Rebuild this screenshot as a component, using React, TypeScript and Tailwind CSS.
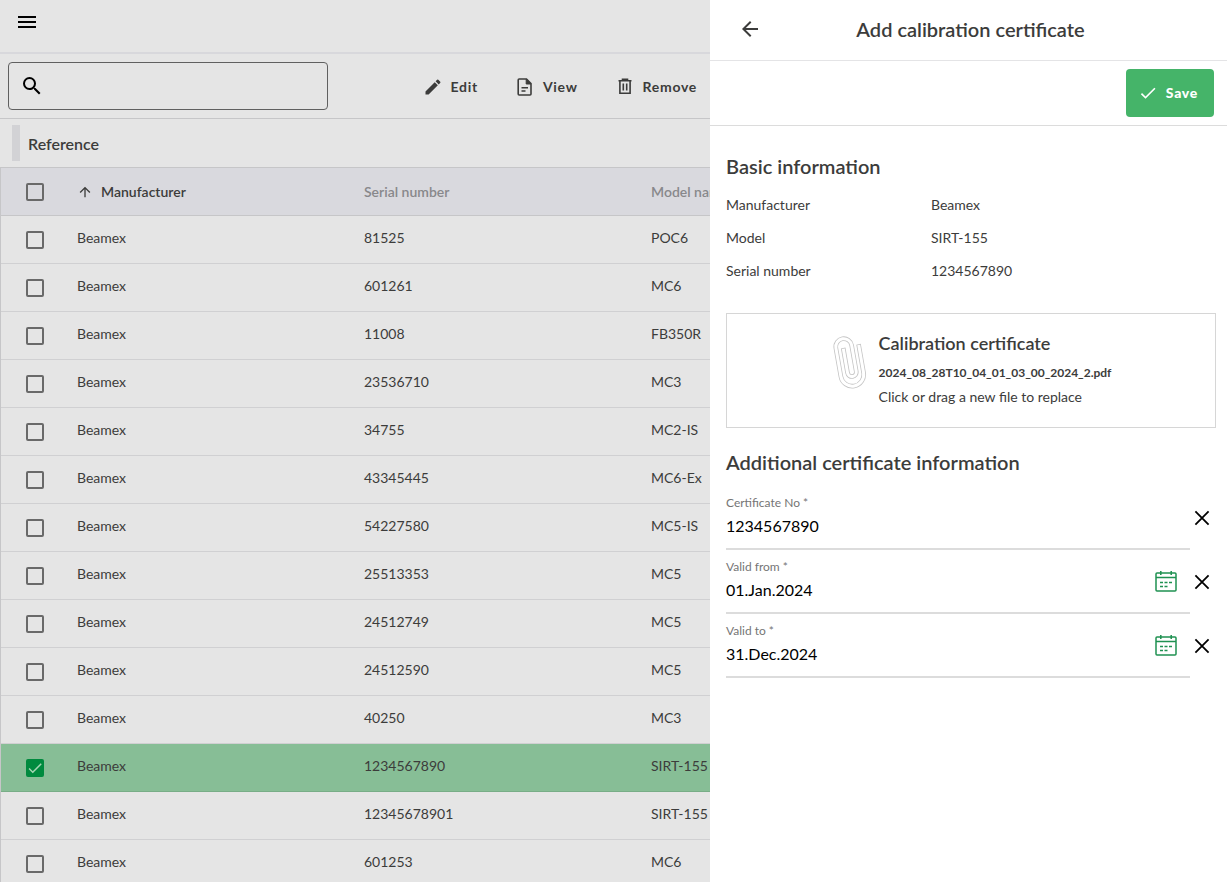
import { useState } from "react";
import type { ReactNode } from "react";
import {
	MdArrowBack,
	MdArrowUpward,
	MdCheck,
	MdEdit,
	MdMenu,
	MdSearch,
} from "react-icons/md";

interface Instrument {
	manufacturer: string;
	serial: string;
	model: string;
}

const instruments: Instrument[] = [
	{ manufacturer: "Beamex", serial: "81525", model: "POC6" },
	{ manufacturer: "Beamex", serial: "601261", model: "MC6" },
	{ manufacturer: "Beamex", serial: "11008", model: "FB350R" },
	{ manufacturer: "Beamex", serial: "23536710", model: "MC3" },
	{ manufacturer: "Beamex", serial: "34755", model: "MC2-IS" },
	{ manufacturer: "Beamex", serial: "43345445", model: "MC6-Ex" },
	{ manufacturer: "Beamex", serial: "54227580", model: "MC5-IS" },
	{ manufacturer: "Beamex", serial: "25513353", model: "MC5" },
	{ manufacturer: "Beamex", serial: "24512749", model: "MC5" },
	{ manufacturer: "Beamex", serial: "24512590", model: "MC5" },
	{ manufacturer: "Beamex", serial: "40250", model: "MC3" },
	{ manufacturer: "Beamex", serial: "1234567890", model: "SIRT-155" },
	{ manufacturer: "Beamex", serial: "12345678901", model: "SIRT-155" },
	{ manufacturer: "Beamex", serial: "601253", model: "MC6" },
];

const DocumentIcon = () => (
	<svg viewBox="0 0 20 20" className="size-5" fill="none" stroke="currentColor" strokeWidth="1.6">
		<path d="M4.2 2h7.3L16 6.5V17a1 1 0 0 1-1 1H4.2a1 1 0 0 1-1-1V3a1 1 0 0 1 1-1z" />
		<path d="M11.2 2v5H16z" fill="currentColor" strokeWidth="1" />
		<path d="M6.5 10.7h6.5M6.5 14h4" strokeWidth="1.4" />
	</svg>
);

const TrashIcon = () => (
	<svg viewBox="0 0 20 20" className="size-5" fill="none" stroke="currentColor" strokeWidth="1.6">
		<path d="M3.5 3.7h13M7.5 3.2V2.4h5v.8" />
		<path d="M4.9 4v12.2h10.2V4" />
		<path d="M8.3 6.5v7M11.7 6.5v7" />
	</svg>
);

const CalendarIcon = () => (
	<svg viewBox="0 0 24 24" className="size-6" fill="none" stroke="currentColor" strokeWidth="1.5">
		<rect x="2" y="4" width="20" height="18" rx="1" />
		<path d="M2 8.6h20M6.8 2v4M17.2 2v4" />
		<path d="M6 13.5h3M10.5 13.5h3M15 13.5h3M6 17.5h3M10.5 17.5h3" />
	</svg>
);

const CrossIcon = () => (
	<svg viewBox="0 0 24 24" className="size-6" fill="none" stroke="black" strokeWidth="1.8">
		<path d="M5.4 5.4l13.2 13.2M18.6 5.4L5.4 18.6" />
	</svg>
);

const clipPath =
	"M30.5 13.5V40a11.5 11.5 0 0 1-23 0V11a8 8 0 0 1 16 0v26.5a4.4 4.4 0 0 1-8.8 0V14.5";

const PaperclipIcon = () => (
	<svg viewBox="0 0 36 54" className="h-[54px] w-9" fill="none" strokeLinecap="square">
		<g transform="rotate(-10 18 27)">
			<path d={clipPath} stroke="#c4c4c4" strokeWidth="4.6" />
			<path d={clipPath} stroke="#ffffff" strokeWidth="3" />
		</g>
	</svg>
);

interface CheckboxProps {
	label: string;
	checked: boolean;
	onChange: () => void;
}

const Checkbox = ({ label, checked, onChange }: CheckboxProps) => (
	<span className="grid size-[18px] place-items-center">
		<input
			type="checkbox"
			aria-label={label}
			checked={checked}
			onChange={onChange}
			className="col-start-1 row-start-1 size-[18px] appearance-none rounded-xs border-2 border-[#696969] checked:border-[#008a3e] checked:bg-[#008a3e]"
		/>
		{checked && (
			<MdCheck className="pointer-events-none col-start-1 row-start-1 size-[18px] text-[#a5d6b4]" />
		)}
	</span>
);

const ToolbarButton = ({ icon, children }: { icon: ReactNode; children: ReactNode }) => (
	<button type="button" className="flex items-center gap-2 text-sm font-bold tracking-wider">
		{icon}
		{children}
	</button>
);

const InfoRow = ({ label, value }: { label: string; value: string }) => (
	<div className="flex h-[33px] items-center">
		<dt className="w-[205px]">{label}</dt>
		<dd>{value}</dd>
	</div>
);

interface FieldProps {
	id: string;
	label: string;
	initial: string;
	date?: boolean;
}

const Field = ({ id, label, initial, date }: FieldProps) => {
	const [value, setValue] = useState(initial);
	return (
		<div className="flex h-16 items-center">
			<div className="flex h-full min-w-0 flex-1 items-center border-b-2 border-[#dcdcdc]">
				<div className="flex min-w-0 flex-1 flex-col">
					<label htmlFor={id} className="text-xs leading-4 text-[#757575]">
						{label} *
					</label>
					<input
						id={id}
						value={value}
						onChange={(e) => setValue(e.target.value)}
						className="h-7 w-full text-base text-black outline-none"
					/>
				</div>
				{date && (
					<button type="button" aria-label={`Pick ${label}`} className="mr-3 text-[#1f9151]">
						<CalendarIcon />
					</button>
				)}
			</div>
			<button type="button" aria-label={`Clear ${label}`} onClick={() => setValue("")}>
				<CrossIcon />
			</button>
		</div>
	);
};

const ReferenceList = () => {
	const [selected, setSelected] = useState<number[]>([11]);

	const toggle = (index: number) =>
		setSelected((prev) =>
			prev.includes(index) ? prev.filter((i) => i !== index) : [...prev, index]
		);

	const toggleAll = () =>
		setSelected((prev) =>
			prev.length === instruments.length ? [] : instruments.map((_, i) => i)
		);

	return (
		<main className="min-w-0 flex-1 overflow-hidden bg-[#e5e5e5]">
			<header className="flex h-[54px] items-start border-b-2 border-[#d8d8dc] px-[15px] pt-[10px]">
				<button type="button" aria-label="Menu">
					<MdMenu className="size-6 text-black" />
				</button>
			</header>
			<div className="flex h-[65px] items-center justify-between border-b border-[#c6c6c8] pr-[13px] pl-2">
				<label className="flex h-12 w-80 items-center gap-2 rounded border border-[#606060] px-[11px]">
					<MdSearch className="size-6 shrink-0 text-black" />
					<input
						type="search"
						aria-label="Search"
						className="min-w-0 flex-1 outline-none"
					/>
				</label>
				<div className="flex items-center gap-[37px] pt-0.5">
					<ToolbarButton icon={<MdEdit className="size-5" />}>Edit</ToolbarButton>
					<ToolbarButton icon={<DocumentIcon />}>View</ToolbarButton>
					<ToolbarButton icon={<TrashIcon />}>Remove</ToolbarButton>
				</div>
			</div>
			<div className="flex h-12 items-center gap-2 px-3">
				<span className="h-9 w-2 bg-[#d2d2d5]" />
				<h1 className="pt-0.5 text-base font-semibold">Reference</h1>
			</div>
			<table className="w-[937px] table-fixed border-separate border-spacing-0 border-t border-l border-[#c6c6c8] text-left text-sm">
				<thead>
					<tr className="h-12 bg-[#d9d9de]">
						<th className="w-[76px] border-b border-[#c6c6c8] pl-[25px]">
							<Checkbox
								label="Select all"
								checked={selected.length === instruments.length}
								onChange={toggleAll}
							/>
						</th>
						<th className="w-[287px] border-b border-[#c6c6c8] font-semibold">
							<button type="button" className="flex items-center gap-2">
								<MdArrowUpward className="size-4" />
								Manufacturer
							</button>
						</th>
						<th className="w-[287px] border-b border-[#c6c6c8] font-semibold text-[#88888b]">
							Serial number
						</th>
						<th className="w-[287px] border-b border-[#c6c6c8] font-semibold text-[#88888b]">
							Model name
						</th>
					</tr>
				</thead>
				<tbody>
					{instruments.map((item, index) => {
						const checked = selected.includes(index);
						return (
							<tr
								key={index}
								className={
									checked
										? "h-12 bg-[#87be96] *:border-b *:border-[#78ad87]"
										: "h-12 *:border-b *:border-[#d0d0d2]"
								}
							>
								<td className="pl-[25px]">
									<Checkbox
										label={`Select ${item.serial}`}
										checked={checked}
										onChange={() => toggle(index)}
									/>
								</td>
								<td className="pb-1">{item.manufacturer}</td>
								<td className="pb-1">{item.serial}</td>
								<td className="pb-1">{item.model}</td>
							</tr>
						);
					})}
				</tbody>
			</table>
		</main>
	);
};

const CertificatePanel = () => (
	<aside className="w-[517px] shrink-0 bg-white">
		<header className="flex h-[61px] items-center border-b border-[#e4e4e6] px-7 pb-0.5">
			<button type="button" aria-label="Back">
				<MdArrowBack className="size-6" />
			</button>
			<h2 className="flex-1 pr-5 text-center text-xl font-semibold">
				Add calibration certificate
			</h2>
		</header>
		<div className="flex h-[65px] items-center justify-end border-b border-[#dcdcdc] px-[13px]">
			<button
				type="button"
				className="flex h-12 items-center gap-2 rounded bg-[#45b469] pr-4 pl-3 text-sm font-black tracking-wider text-white"
			>
				<MdCheck className="size-5" />
				Save
			</button>
		</div>
		<div className="px-4 pt-6">
			<h3 className="text-xl leading-8 font-semibold">Basic information</h3>
			<dl className="pt-[6px] text-sm">
				<InfoRow label="Manufacturer" value="Beamex" />
				<InfoRow label="Model" value="SIRT-155" />
				<InfoRow label="Serial number" value="1234567890" />
			</dl>
		</div>
		<div className="pt-[26px] pr-[11px] pl-4">
			<button
				type="button"
				className="flex h-[115px] w-full items-start justify-center gap-3 border border-[#d6d6d6] pt-[15px] text-left"
			>
				<span className="pt-[6px]">
					<PaperclipIcon />
				</span>
				<span className="flex flex-col">
					<span className="text-lg leading-7 font-semibold">Calibration certificate</span>
					<span className="text-xs leading-8 font-bold">
						2024_08_28T10_04_01_03_00_2024_2.pdf
					</span>
					<span className="text-sm leading-4">Click or drag a new file to replace</span>
				</span>
			</button>
		</div>
		<form className="pt-[18px] pr-[13px] pl-4">
			<h3 className="pb-2 text-xl leading-8 font-semibold">
				Additional certificate information
			</h3>
			<Field id="certificate-no" label="Certificate No" initial="1234567890" />
			<Field id="valid-from" label="Valid from" initial="01.Jan.2024" date />
			<Field id="valid-to" label="Valid to" initial="31.Dec.2024" date />
		</form>
	</aside>
);

const App = () => {
	return (
		<div className="flex h-screen overflow-hidden font-['Lato','Liberation_Sans',sans-serif] text-[#3c3c3b]">
			<ReferenceList />
			<CertificatePanel />
		</div>
	);
};

export default App;
